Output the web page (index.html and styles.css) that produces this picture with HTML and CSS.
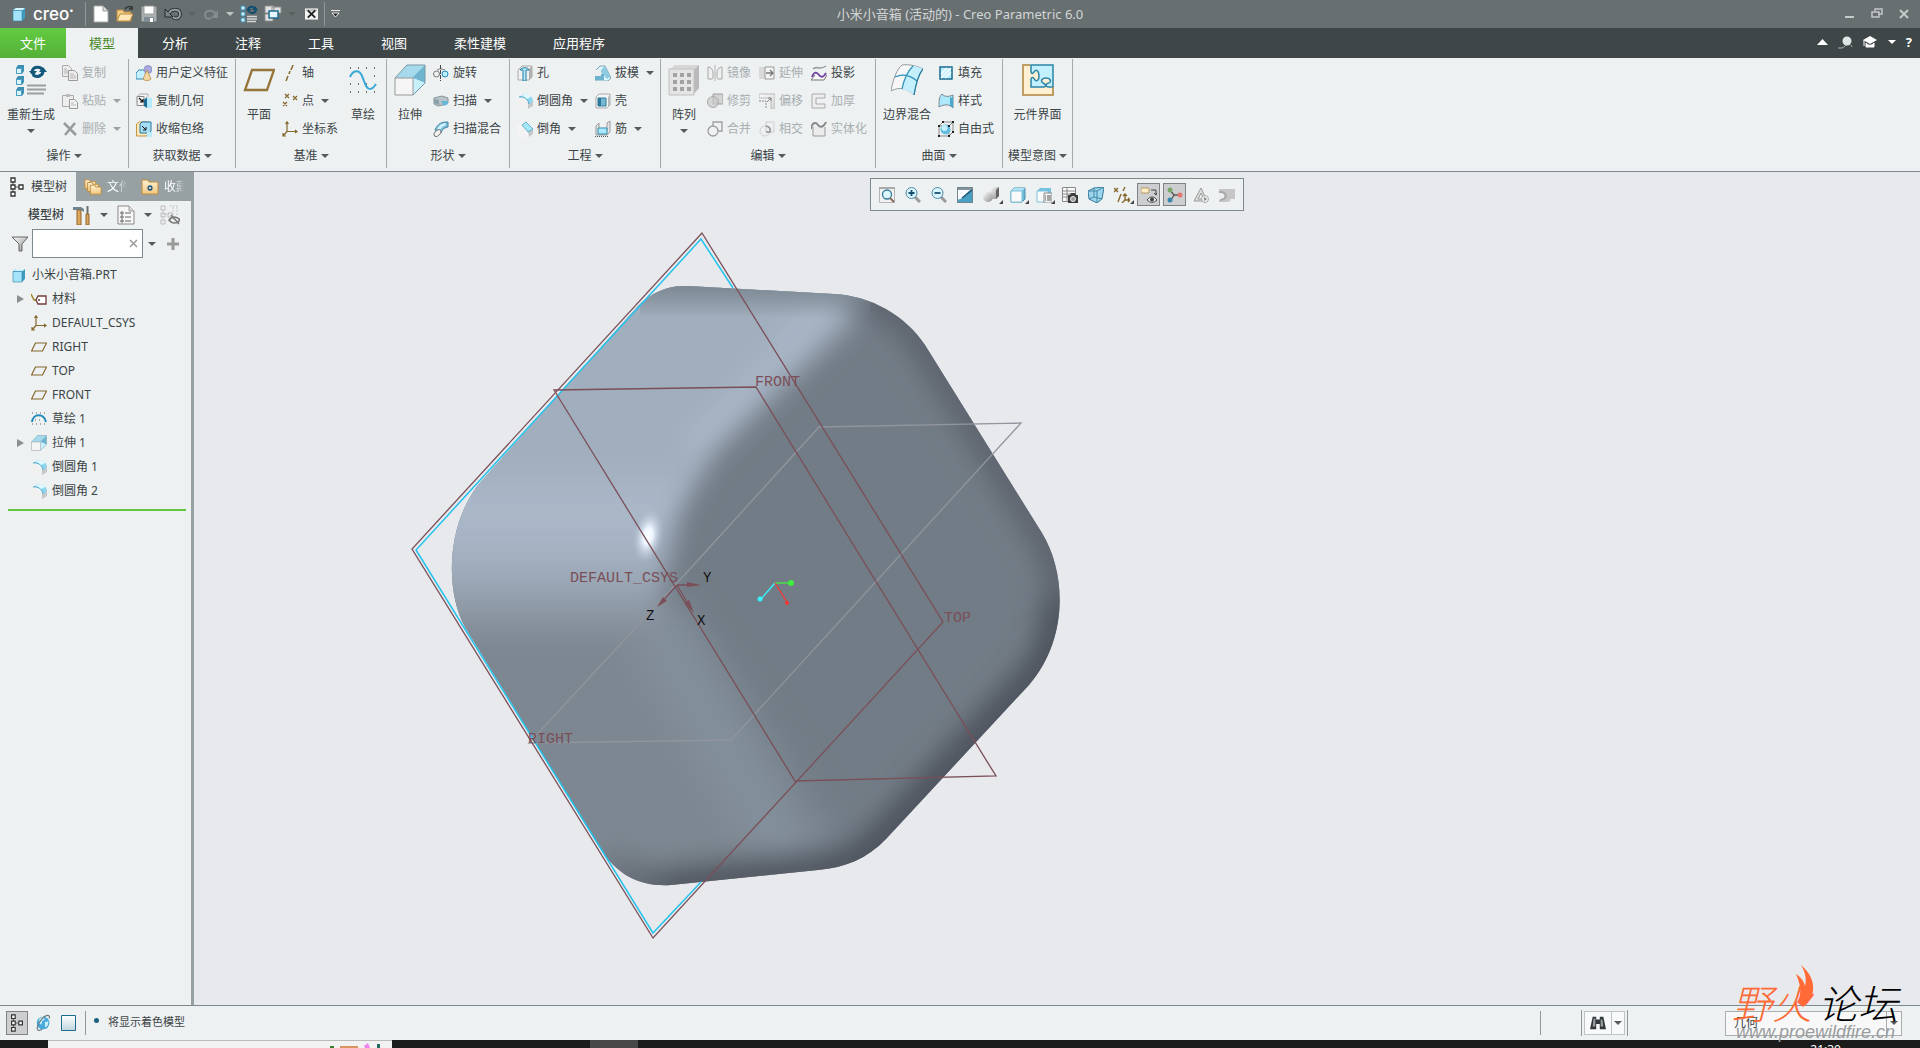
FILE: index.html
```html
<!DOCTYPE html>
<html lang="zh-CN">
<head>
  <meta charset="UTF-8">
  <meta name="viewport" content="width=device-width, initial-scale=1.0">
  <title>小米小音箱 (活动的) - Creo Parametric 6.0</title>
  <link rel="stylesheet" href="styles.css">
</head>
<body>
  <!-- Icon library -->
  <svg class="defs" width="0" height="0" aria-hidden="true">
    <defs>
      <linearGradient id="gGrey" x1="0" y1="0" x2="1" y2="1"><stop offset="0" stop-color="#fff"/><stop offset="1" stop-color="#8c8c8c"/></linearGradient>
      <linearGradient id="gGold" x1="0" y1="0" x2="0" y2="1"><stop offset="0" stop-color="#fff1d2"/><stop offset="1" stop-color="#f0c780"/></linearGradient>
      <linearGradient id="gPale" x1="0" y1="0" x2="1" y2="1"><stop offset="0" stop-color="#fafafa"/><stop offset="1" stop-color="#d4d4d4"/></linearGradient>
      <linearGradient id="gPage" x1="0" y1="0" x2="0" y2="1"><stop offset="0" stop-color="#fff"/><stop offset="1" stop-color="#bed5e0"/></linearGradient>
    </defs>
    <symbol id="cube" viewBox="0 0 16 16"><path d="M2 4l3-2h9v10l-3 3H2z" fill="#3f9cc0"/><path d="M2 4l3-2h9l-3 2.500z" fill="#d3f3ff"/><path d="M2 4.500h9V15H2z" fill="#a4e4fb" stroke="#2c7f9f" stroke-width=".6"/></symbol>
    <symbol id="new" viewBox="0 0 16 18"><path d="M1 1h9l5 5v11H1z" fill="#fff" stroke="#aaa"/><path d="M10 1v5h5" fill="#ddd" stroke="#999"/></symbol>
    <symbol id="open" viewBox="0 0 18 18"><path d="M1 5h6l1 2h7v9H1z" fill="#f4cd86" stroke="#b98a3c"/><path d="M4 9h13l-3 7H1z" fill="#ffe7b8" stroke="#b98a3c"/><path d="M9 4c2-3 5-3 7-1m0-2v3h-3" fill="none" stroke="#333" stroke-width="1.500"/></symbol>
    <symbol id="save" viewBox="0 0 18 18"><path d="M1 1h16v16H1z" fill="#aab0b2" stroke="#666"/><path d="M4 1h10v8H4z" fill="#fff" stroke="#999"/><path d="M4 12h10v5H4z" fill="#7f8c93"/><path d="M10 13h3v4h-3z" fill="#fff"/></symbol>
    <symbol id="undo" viewBox="0 0 18 16"><path d="M5 7c3-5 11-4 11 1 0 4-4 6-7 3" fill="none" stroke="#22282a" stroke-width="3.500"/><path d="M1 3v8h8z" fill="#7b8486" stroke="#22282a"/><path d="M5 7c3-5 11-4 11 1 0 4-4 6-7 3" fill="none" stroke="#9aa3a5" stroke-width="1.800"/></symbol>
    <symbol id="redo" viewBox="0 0 18 16"><path d="M14 8c-3-5-11-4-11 1 0 3 3 5 6 3" fill="none" stroke="#858c8e" stroke-width="2"/><path d="M16 4v8H9z" fill="#858c8e"/></symbol>
    <symbol id="regen" viewBox="0 0 32 32"><path d="M1 4l2-3h6v6l-2 3H1zM1 15l2-3h6v6l-2 3H1zM1 26l2-3h6v6l-2 3H1z" fill="#3c8fb2"/><path d="M1.500 4.500h5v5h-5zM1.500 15.500h5v5h-5zM1.500 26.500h5v5h-5z" fill="#d6f5ff" stroke="#4c9fc0"/><path d="M12 21.500h19M12 25.500h19M12 29.500h17" stroke="#9b9fa1" stroke-width="2"/><path d="M17 8c1-6 8-6 11-2M28 7c0 5-6 7-10 4" fill="none" stroke="#13577b" stroke-width="3"/><path d="M14 7h8l-4 5zM24 8h8l-4-5z" fill="#13577b"/></symbol>
    <symbol id="regenS" viewBox="0 0 18 18"><path d="M1 1h4v4H1zM1 7h4v4H1zM1 13h4v4H1z" fill="#c8f0ff" stroke="#3f8fb0"/><path d="M7 11.500h10M7 14h10M7 16.500h9" stroke="#d2d5d6" stroke-width="1.500"/><path d="M8 5c1-4 5-4 6-2M16 4c0 4-4 5-6 3" fill="none" stroke="#104f72" stroke-width="2"/><path d="M6 4h5L8.500 8zM12 5h6l-3-4z" fill="#104f72"/></symbol>
    <symbol id="windows" viewBox="0 0 18 18"><path d="M1 1h9v7H1zM8 2h9v6H8zM1 9h8v7H1z" fill="#e1e1e1" stroke="#8d8d8d"/><path d="M5 6h9v7H5z" fill="#e6f7ff" stroke="#1f6c91" stroke-width="1.500"/></symbol>
    <symbol id="closewin" viewBox="0 0 14 12"><path d="M0 0h14v12H0z" fill="#f4f4f4"/><path d="M1 1h12v2H1z" fill="#bbb"/><path d="M3 2l8 8M11 2l-8 8" stroke="#222" stroke-width="2"/></symbol>
    <symbol id="copy" viewBox="0 0 16 16"><path d="M.500.500h6l3 3v8h-9z" fill="#ececec" stroke="#aaa"/><path d="M6.500 5.500h6l3 3v7h-9z" fill="#eee" stroke="#999"/><path d="M8 9h4M8 11h6M8 13h6M2 4h3M2 6h4M2 8h4" stroke="#b5b5b5"/></symbol>
    <symbol id="paste" viewBox="0 0 16 16"><path d="M.500 2.500h11v11H.500z" fill="#eee" stroke="#aaa"/><path d="M4 1h4v3H4z" fill="#bbb"/><path d="M7.500 6.500h5l3 3v6h-8z" fill="#f2f2f2" stroke="#999"/><path d="M9 10h3M9 12h5" stroke="#bbb"/></symbol>
    <symbol id="del" viewBox="0 0 16 16"><path d="M2 2l12 12M13 2L3 14" stroke="#989c9e" stroke-width="2.600"/></symbol>
    <symbol id="udf" viewBox="0 0 16 16"><path d="M0 8l3-3h7v7l-2 2H0z" fill="#c3efff" stroke="#3589ae"/><circle cx="12" cy="4.500" r="4" fill="#aaa8e0" stroke="#7879b6" stroke-width=".6"/><path d="M11 5l4 9c-2 2-6 2-8 0z" fill="#f5d9a3" stroke="#ad8137" stroke-width=".7"/></symbol>
    <symbol id="copygeo" viewBox="0 0 16 16"><path d="M1 4l3-3h8v3" fill="#f3f3f3" stroke="#aaa"/><path d="M1 3.500h7v9H1z" fill="#f4f4f4" stroke="#888"/><path d="M3 5l4 4m0-3v3H4" stroke="#111" fill="none" stroke-width="1.200"/><path d="M8 7l3-3v11l-3-2z" fill="#1a6b91"/><path d="M11 5h5v10h-5z" fill="#b5e9fc"/></symbol>
    <symbol id="shrink" viewBox="0 0 16 16"><path d="M.500 3l3-2h9v11l-2 3H.500z" fill="#ffe8b9" stroke="#c19545"/><path d="M4 3l2-2h9v9l-2 2H4z" fill="#a6dff5" stroke="#28769b"/><path d="M6 5l4 4m0-3v3H7" stroke="#111" fill="none"/><path d="M11 11h5v5h-5z" fill="#b9ecff"/></symbol>
    <symbol id="plane" viewBox="0 0 32 32"><path d="M9 6h22l-7 20H2z" fill="none" stroke="#957539" stroke-width="2.300"/></symbol>
    <symbol id="planeS" viewBox="0 0 16 16"><path d="M4.500 4h11l-4 8H.500z" fill="none" stroke="#86682d" stroke-width="1.200"/></symbol>
    <symbol id="axis" viewBox="0 0 16 16"><path d="M11 0L9 5M8 6L7 9M6 11l-2 5" stroke="#86682d" stroke-width="1.500"/></symbol>
    <symbol id="points" viewBox="0 0 16 16"><path d="M3 1l4 4m0-4L3 5M11 3l4 4m0-4l-4 4M1 9l4 4m0-4l-4 4" stroke="#86682d" stroke-width="1.300"/></symbol>
    <symbol id="csys" viewBox="0 0 16 16"><path d="M5 1v9.500h10M5 10.500L1 15M3.500 3L5 .800 6.500 3M13 9l2 1.500L13 12M1 12v3h3" fill="none" stroke="#86682d" stroke-width="1.200"/></symbol>
    <symbol id="sketch" viewBox="0 0 32 32"><path d="M3 4h1m7 0h1m7 0h1m7 0h1M3 12h1m23 0h1M3 20h1m7 0h1m7 0h1M3 28h1m7 0h1m7 0h1m7 0h1" stroke="#444" stroke-width="1.300"/><path d="M3 13c3-7 9-8 12-1s4 13 8 13c3 0 4-2 6-5" fill="none" stroke="#38a9d7" stroke-width="2"/></symbol>
    <symbol id="sketchS" viewBox="0 0 16 16"><path d="M1 2h1m3 0h1m3 0h1m3 0h1M1 13h1m3 0h1m3 0h1m3 0h1M4 9h1m3 0h1" stroke="#666"/><path d="M1 11C2 2 13 2 15 11" fill="none" stroke="#2389b9" stroke-width="2"/></symbol>
    <symbol id="extrude" viewBox="0 0 32 32"><path d="M1 14L13 1h18v18L19 32z" fill="#dcf7ff"/><path d="M13 1h18L19 14H1z" fill="#a5d9ec"/><path d="M31 1v18L19 14V13z" fill="#70b5cf"/><path d="M31 19L19 32V14z" fill="#c8f0fc"/><path d="M1 14L13 1h18v18L19 31" fill="none" stroke="#7998a5"/><path d="M1 14h18v17H1z" fill="#f5f5f5" stroke="#999"/></symbol>
    <symbol id="revolve" viewBox="0 0 16 16"><path d="M4 5c3-2 5-1 8 0" fill="none" stroke="#777"/><circle cx="3.500" cy="9" r="3" fill="#eee" stroke="#777"/><circle cx="12" cy="9" r="3" fill="#baf0ff" stroke="#2488b0"/><path d="M7.500 0v16" stroke="#444" stroke-dasharray="4 1"/></symbol>
    <symbol id="sweep" viewBox="0 0 16 16"><path d="M1 5l8-2 6 2v5l-5-1v3l-5 1-4-2z" fill="#b9c4c9" stroke="#8a969b"/><path d="M8 8h7v3l-4 2z" fill="#68b8d7"/><path d="M1 6l5 1v5l-5-2z" fill="#8ba1a9"/></symbol>
    <symbol id="blend" viewBox="0 0 16 16"><path d="M2 9C5 2 9 1 15 1v5C10 7 9 9 8 12z" fill="#78bfdc" stroke="#4382a0"/><path d="M4 8C6 4 9 2 13 2l-1 3C9 5 8 7 7 10z" fill="#cef3ff"/><ellipse cx="4.500" cy="12" rx="4" ry="2.500" fill="#f4f4f4" stroke="#777" transform="rotate(-45 4.500 12)"/></symbol>
    <symbol id="hole" viewBox="0 0 16 16"><path d="M1 5l4-4h10v11l-3 3H1z" fill="#f1f1f1" stroke="#aaa"/><path d="M12 4l3-3v11l-3 3z" fill="#b0b0b0"/><path d="M3 5c1-3 9-3 9 0H9v11H6V5z" fill="#b9e8f8" stroke="#217fa5"/></symbol>
    <symbol id="round" viewBox="0 0 16 16"><path d="M0 5l4-4h8l4 5v7l-4 3H0z" fill="#f1f1f1"/><path d="M11 10l5-3v6l-5 3z" fill="#c4c8ca"/><path d="M2 4l5-3c5 0 9 3 9 7l-4 3C12 7 8 4 2 4z" fill="#8ed5ee"/><path d="M2 4c5-1 9 2 10 7" fill="none" stroke="#4ba7c8"/><path d="M4 3l4-2c3 0 5 1 6 3l-4 2C8 4 6 3 4 3z" fill="#e0f8ff"/></symbol>
    <symbol id="chamfer" viewBox="0 0 16 16"><path d="M0 5l4-4h7l5 6v6l-4 3H0z" fill="#f3f3f3"/><path d="M11 11l5-4v6l-4 3z" fill="#c4c8ca"/><path d="M5 4l4-3 7 7-5 3z" fill="#a5e6f8" stroke="#3d9aba" stroke-width=".7"/></symbol>
    <symbol id="draft" viewBox="0 0 16 16"><path d="M1 5l4-4h5l6 12-3 3H1z" fill="#def7ff" stroke="#78a3b3"/><path d="M5 6l5-5 5 11-3 2z" fill="#8ccbe2"/><path d="M0 9h9v6H0z" fill="#6cb4cd"/><path d="M0 5h6v6H0z" fill="#eee"/></symbol>
    <symbol id="shell" viewBox="0 0 16 16"><path d="M1 4l3-3h11v11l-3 3H1z" fill="#f4f4f4" stroke="#aaa"/><path d="M3 5h8v8H3z" fill="#78b8d1" stroke="#317f9e"/><path d="M3 5h3v8H3z" fill="#2c789b"/><path d="M13 4l2-2v10l-2 2z" fill="#bbb"/></symbol>
    <symbol id="rib" viewBox="0 0 16 16"><path d="M1 5l3-3v8h8V2l3-2v11l-3 3H1z" fill="#e6e6e6" stroke="#999"/><path d="M3 7h9v6H3z" fill="#a9eaff" stroke="#3689aa"/><path d="M0 15.500h14" stroke="#555" stroke-dasharray="1 1"/></symbol>
    <symbol id="pattern" viewBox="0 0 32 32"><path d="M1 7l6-6h24v23l-6 7H1z" fill="#b9b9b9"/><path d="M1 7l6-6h24l-6 6z" fill="#d7d7d7"/><path d="M1 5h25v26H1z" fill="#e4e4e4" stroke="#c0c0c0"/><path d="M5 9h4v4H5zM12 9h4v4h-4zM19 9h4v4h-4zM5 16h4v4H5zM12 16h4v4h-4zM19 16h4v4h-4zM5 23h4v4H5zM12 23h4v4h-4zM19 23h4v4h-4z" fill="#a2a2a2"/></symbol>
    <symbol id="mirror" viewBox="0 0 16 16"><path d="M1 2c3 0 5 3 5 6s0 6-1 6H1zM15 2c-3 0-5 3-5 6s0 6 1 6h4z" fill="#f0f0f0" stroke="#a6a6a6"/><path d="M8 0v16" stroke="#b3b3b3"/></symbol>
    <symbol id="trim" viewBox="0 0 16 16"><path d="M6 1h10v10H6z" fill="#d4d4d4" stroke="#9e9e9e"/><circle cx="6" cy="9" r="5.500" fill="#c9c9c9" fill-opacity=".7" stroke="#aaa"/></symbol>
    <symbol id="merge" viewBox="0 0 16 16"><path d="M6 1h9v9H6z" fill="none" stroke="#9e9e9e" stroke-width="1.300"/><circle cx="6" cy="10" r="5" fill="#edf1f2" stroke="#9e9e9e" stroke-width="1.300"/></symbol>
    <symbol id="intersect" viewBox="0 0 16 16"><path d="M7 1h8v10H7z" fill="none" stroke="#cfcfcf"/><circle cx="6" cy="10" r="5" fill="none" stroke="#cfcfcf"/><path d="M7 5c4 1 5 3 4 6H7" fill="none" stroke="#929292" stroke-width="1.500"/></symbol>
    <symbol id="extend" viewBox="0 0 16 16"><path d="M0 2h7v12H0z" fill="#d9d9d9"/><path d="M6 2h9v12H6z" fill="#f4f4f4" stroke="#999"/><path d="M7 8h6m-2-3l3 3-3 3" stroke="#777" fill="none" stroke-width="1.300"/></symbol>
    <symbol id="offset" viewBox="0 0 16 16"><path d="M0 1h16v15h-4V5H0z" fill="url(#gPale)" stroke="#bbb"/><path d="M0 8h7v8" fill="none" stroke="#888" stroke-dasharray="2 1"/><path d="M8 9l4-4m-3 0h3v3" fill="none" stroke="#888"/></symbol>
    <symbol id="project" viewBox="0 0 16 16"><path d="M2 4c4-4 6 2 13-3" fill="none" stroke="#929b9e" stroke-width="1.500"/><path d="M4 10L0 15h13l3-5" fill="#f8f8f8" stroke="#777"/><path d="M1 12c2-6 5-5 7-2s5 2 7-2" fill="none" stroke="#7241a0" stroke-width="1.800"/></symbol>
    <symbol id="thicken" viewBox="0 0 16 16"><path d="M1 1h13v4H5v6h9v4H1z" fill="#eee" stroke="#aaa"/></symbol>
    <symbol id="solidify" viewBox="0 0 16 16"><path d="M2 6v9h12V6" fill="#ececec" stroke="#999"/><path d="M0 8c1-7 5-7 7-4s6 2 8-3" fill="none" stroke="#888" stroke-width="2"/></symbol>
    <symbol id="boundary" viewBox="0 0 32 32"><path d="M0 27C2 15 6 5 11 1c8-1 15 1 21 4-5 6-7 14-9 26C17 25 9 22 0 27z" fill="#f7f7f7" stroke="#929b9e"/><path d="M22 2c4 0 7 2 10 3-5 6-7 14-9 26-3-3-7-5-12-6 1-9 4-17 11-23z" fill="#c4effd"/><path d="M22 2C16 8 13 15 11 25M4 13c9-4 16-1 22 4" fill="none" stroke="#2d91b8" stroke-width="1.200"/><path d="M23 31c2-12 4-20 9-26" stroke="#247ca0" fill="none" stroke-width="1.300"/></symbol>
    <symbol id="fill" viewBox="0 0 16 16"><path d="M2 2h12v12H2z" fill="#bfefff" stroke="#186b90" stroke-width="1.500"/><path d="M3 9l6-6M3 13L13 3M7 13l6-6" stroke="#fff" stroke-width="1.200"/></symbol>
    <symbol id="style" viewBox="0 0 16 16"><path d="M1 14C1 7 1 4 4 1c3 3 6 3 11 1v13c-3-4-9-4-14-1z" fill="#aee8fb" stroke="#78888e"/><path d="M12 4c2 1 2 1 3-1v12l-3-2z" fill="#4ba9cf"/></symbol>
    <symbol id="freestyle" viewBox="0 0 16 16"><path d="M1 5h10v10H1zM1 5l4-4h10v10l-4 4M11 5l4-4" fill="none" stroke="#8b8b8b"/><circle cx="7.500" cy="8.500" r="5" fill="#64bce0"/><circle cx="6.500" cy="7" r="3" fill="#c4f2ff"/><path d="M0 4h2v2H0zM10 4h2v2h-2zM0 14h2v2H0zM10 14h2v2h-2zM4 0h2v2H4zM14 0h2v2h-2zM14 10h2v2h-2z" fill="#222"/></symbol>
    <symbol id="component" viewBox="0 0 32 32"><path d="M1 1h30v30H1z" fill="#fff0d4"/><path d="M9 1h22v22h-5c-4-1-1-4 1-4 3-2 1-5-3-5s-6 3-3 5c2 1 4 3 1 4H9v-8c1-3 3-1 4 1 2 2 4 0 4-4s-2-7-4-5-3 4-4 1z" fill="#c3f0ff" stroke="#2d84a6" stroke-width="1.500"/><path d="M8 1H1v30h30v-8" fill="none" stroke="#af8239" stroke-width="1.500"/></symbol>
    <symbol id="tree" viewBox="0 0 16 20"><path d="M4 5v10M6 10h5" stroke="#555"/><path d="M2 1h4v4H2zM2 8h4v4H2zM2 15h4v4H2zM10 8h4v4h-4z" fill="#fff" stroke="#333" stroke-width="1.300"/></symbol>
    <symbol id="folders" viewBox="0 0 20 20"><g fill="url(#gGold)" stroke="#bd8c3e"><path d="M1 2h5l1 2h6v8H1z"/><path d="M4 5h5l1 2h6v8H4z"/><path d="M7 8h5l1 2h6v8H7z"/></g></symbol>
    <symbol id="fav" viewBox="0 0 18 16"><path d="M1 1h6l1 2h9v12H1z" fill="url(#gGold)" stroke="#bd8c3e"/><path d="M9 6v6M6 9h6M7 7l4 4M11 7l-4 4" stroke="#174c75" stroke-width="1.200"/><circle cx="9" cy="9" r="1" fill="#fff"/></symbol>
    <symbol id="tools" viewBox="0 0 18 20"><path d="M0 2h8l3 2v3L8 5H0z" fill="#6f8490"/><path d="M4 5h4v15H4z" fill="#dca65b" stroke="#8f662e"/><path d="M14.500 1v9" stroke="#6e6e6e" stroke-width="2"/><path d="M13 9h3v11h-3z" fill="#dba25a" stroke="#8f662e"/></symbol>
    <symbol id="list" viewBox="0 0 18 20"><path d="M1 1h11l5 5v13H1z" fill="#f7f7f7" stroke="#888"/><path d="M12 1v5h5" fill="#ddd" stroke="#999"/><path d="M8 8h6M8 12h6M8 16h6" stroke="#666"/><g fill="#fff" stroke="#555"><circle cx="5" cy="8" r="1.200"/><circle cx="5" cy="12" r="1.200"/><circle cx="5" cy="16" r="1.200"/></g></symbol>
    <symbol id="hidden" viewBox="0 0 20 20"><path d="M3 5v10M5 9h4M10 1h9M13 2v8M17 2v8" stroke="#c1c5c7" stroke-dasharray="2 1"/><path d="M1 1h4v4H1zM1 8h4v4H1zM1 15h4v4H1zM8 8h4v4H8z" fill="none" stroke="#bbb"/><path d="M9 15c3-4 8-4 11 0-3 4-8 4-11 0zM11 10l8 9" fill="none" stroke="#777" stroke-width="1.500"/></symbol>
    <symbol id="funnel" viewBox="0 0 16 16"><path d="M0 1h16l-6 7v7H7V8z" fill="url(#gGrey)" stroke="#666"/></symbol>
    <symbol id="plus" viewBox="0 0 12 12"><path d="M6 0v12M0 6h12" stroke="#999" stroke-width="3"/></symbol>
    <symbol id="material" viewBox="0 0 16 16"><path d="M0 3l3 6h4" fill="none" stroke="#a08124" stroke-width="1.500"/><path d="M5 9l2-4h8v8H7z" fill="#fff" stroke="#713b39" stroke-width="1.300"/><circle cx="8" cy="9" r="1" fill="#713b39"/></symbol>
    <symbol id="zoomfit" viewBox="0 0 16 16"><path d="M.500.500h15v15H.500z" fill="#f2f2f2" stroke="#b5b5b5"/><path d="M0 1h16" stroke="#aaa" stroke-width="2"/><circle cx="8" cy="7.500" r="4.500" fill="#ddf8ff" stroke="#347b98" stroke-width="1.300"/><path d="M11 11l4 4" stroke="#8a7062" stroke-width="2"/></symbol>
    <symbol id="zoomin" viewBox="0 0 16 16"><path d="M10 10l5 5" stroke="#999" stroke-width="3"/><circle cx="6.500" cy="6" r="5.500" fill="#d9f5ff" stroke="#4f8ba4"/><path d="M6.500 3v6M3.500 6h6" stroke="#15506f" stroke-width="1.800"/></symbol>
    <symbol id="zoomout" viewBox="0 0 16 16"><path d="M10 10l5 5" stroke="#999" stroke-width="3"/><circle cx="6.500" cy="6" r="5.500" fill="#d9f5ff" stroke="#4f8ba4"/><path d="M3.500 6h6" stroke="#15506f" stroke-width="1.800"/></symbol>
    <symbol id="repaint" viewBox="0 0 16 16"><path d="M0 0h16v16H0z" fill="#4aa0c2"/><path d="M0 3h14C8 5 10 11 0 13z" fill="#f8fcff"/><path d="M0 1.500h16" stroke="#85949a" stroke-width="3"/><path d="M5 11l10-8" stroke="#174f6b" stroke-width="1.500"/><path d="M.500.500h15v15H.500z" fill="none" stroke="#73858c"/></symbol>
    <symbol id="shade" viewBox="0 0 16 16"><path d="M7 3l3-3h6v9l-3 3H7z" fill="url(#gGrey)"/><path d="M13 3l3-3v9l-3 3z" fill="#666"/><circle cx="5" cy="10" r="5" fill="url(#gGrey)"/></symbol>
    <symbol id="view" viewBox="0 0 16 16"><path d="M1 4l3-3h11v11l-3 3H1z" fill="#6cbcda" stroke="#4c8dab"/><path d="M1 4l3-3h11l-3 3z" fill="#aee3f5"/><path d="M1 4h11v11H1z" fill="#fafafa" stroke="#7fc1da"/></symbol>
    <symbol id="viewlist" viewBox="0 0 16 16"><path d="M1 4l3-3h11v11l-3 3H1z" fill="#77c3df"/><path d="M1 4h11v11H1z" fill="#fafafa" stroke="#7fc1da"/><path d="M8 6h8v10H8z" fill="#f5f5f5" stroke="#888"/><path d="M9 9h1m1 0h4M9 11h1m1 0h4M9 13h1m1 0h4" stroke="#555"/></symbol>
    <symbol id="viewmgr" viewBox="0 0 16 16"><path d="M.500.500h13v14H.500zM0 4h14M0 7h14M0 10h14M5 0v15" fill="#fafafa" stroke="#888"/><path d="M6 8h2l1-2h4l1 2h2v8H6z" fill="#3e3e3e"/><circle cx="11" cy="12" r="2.500" fill="#9a9a9a" stroke="#eee"/></symbol>
    <symbol id="perspective" viewBox="0 0 16 16"><path d="M0 4l6-3 10-1-2 12-5 4-8-4z" fill="#9bd6ec" stroke="#34799a"/><path d="M0 4h9l7-4M9 4v12M6 1v9l8 2M1 12l5-2" fill="none" stroke="#4587a5"/></symbol>
    <symbol id="datumdisp" viewBox="0 0 16 16"><path d="M0 1l4 4m0-4L0 5M11 0L9 4M7 7l-3 8M11 7v6h5M11 13l-3 3M9 9l2-2 2 2M14 11l2 2-2 2" fill="none" stroke="#86682d" stroke-width="1.400"/></symbol>
    <symbol id="annot" viewBox="0 0 16 16"><path d="M0 1h8v5H0z" fill="#ffedc6" stroke="#b39a66"/><path d="M10 3h5v5m-2-2l2 2 1-2" fill="none" stroke="#444"/><path d="M6 13c3-4 7-4 10 0-3 3-7 3-10 0z" fill="#eee" stroke="#444"/><circle cx="11" cy="12.500" r="2" fill="#444"/></symbol>
    <symbol id="spin" viewBox="0 0 16 16"><path d="M3 3l4 5-3 5M7 8h6" fill="none" stroke="#555" stroke-width="1.300"/><circle cx="3" cy="3" r="2.500" fill="#75a967"/><circle cx="3" cy="13" r="2.500" fill="#3986ae"/><circle cx="13" cy="8" r="2.500" fill="#df7770"/></symbol>
    <symbol id="warn" viewBox="0 0 16 16"><path d="M8 1l6 13H1zM8 6l-3 6h6z" fill="#ddd" stroke="#999"/><circle cx="12" cy="12" r="3.500" fill="#eee" stroke="#aaa"/><path d="M11 10v4l3-2z" fill="#888"/></symbol>
    <symbol id="fringe" viewBox="0 0 16 16"><path d="M0 2h16v10h-5c1 0 1 3-3 3H0v-2c7 0 7-8 0-8z" fill="#c6c6c6"/><path d="M0 5c9-1 9 8 1 8" fill="none" stroke="#aaa" stroke-width="2"/></symbol>
    <symbol id="globe" viewBox="0 0 18 20"><circle cx="8" cy="10" r="7" fill="#44a9dc"/><path d="M4 5l4-2 2 3-3 2-1 4-3-2zM10 9l4-1-1 5-3 2z" fill="#c9ecfa"/><path d="M7 17C2 20-1 17 4 9S16-1 15 5" fill="none" stroke="#687a82" stroke-width="1.300"/></symbol>
    <symbol id="page" viewBox="0 0 18 18"><path d="M1.500 1.500h14v15h-14z" fill="url(#gPage)" stroke="#1d6a8d"/></symbol>
    <symbol id="binoc" viewBox="0 0 18 16"><path d="M3 1h4v3h4V1h4l3 14h-7V9H7v6H0z" fill="#313739"/><path d="M4 3h2v9H3zM12 4h2l1 8h-3z" fill="#969da0"/></symbol>
  </svg>

  <!-- Title bar -->
  <header class="titlebar">
    <div class="quick">
      <svg class="ic16"><use href="#cube"/></svg>
      <span class="brand">creo<sup>•</sup></span>
      <span class="vline"></span>
      <button aria-label="新建"><svg class="ic18"><use href="#new"/></svg></button>
      <button aria-label="打开"><svg class="ic18"><use href="#open"/></svg></button>
      <button aria-label="保存"><svg class="ic18"><use href="#save"/></svg></button>
      <button aria-label="撤消"><svg class="ic18"><use href="#undo"/></svg></button>
      <i class="arrow faint"></i>
      <button aria-label="重做"><svg class="ic18"><use href="#redo"/></svg></button>
      <i class="arrow pale"></i>
      <button aria-label="重新生成"><svg class="ic18"><use href="#regenS"/></svg></button>
      <button aria-label="窗口"><svg class="ic18"><use href="#windows"/></svg></button>
      <i class="arrow faint"></i>
      <button aria-label="关闭"><svg class="closeicon"><use href="#closewin"/></svg></button>
      <span class="vline"></span>
      <button aria-label="自定义快速访问工具栏"><svg width="9" height="8" viewBox="0 0 9 8"><path d="M0 .500h9M1 3h7L4.500 7z" fill="#222" stroke="#eee"/></svg></button>
    </div>
    <div class="title">小米小音箱 (活动的) - Creo Parametric 6.0</div>
    <div class="winctl">
      <button aria-label="最小化"><svg width="12" height="12"><path d="M1 9h9" stroke="#c4c8c9" stroke-width="2"/></svg></button>
      <button aria-label="还原"><svg width="12" height="12"><path d="M4 3V1h7v5H8M1 4h7v5H1z" fill="none" stroke="#c4c8c9" stroke-width="1.500"/></svg></button>
      <button aria-label="关闭"><svg width="12" height="12"><path d="M2 2l8 8M10 2l-8 8" stroke="#c4c8c9" stroke-width="2"/></svg></button>
    </div>
  </header>

  <!-- Ribbon tabs -->
  <nav class="tabs">
    <button class="file">文件</button>
    <button class="active">模型</button>
    <button>分析</button>
    <button>注释</button>
    <button>工具</button>
    <button>视图</button>
    <button>柔性建模</button>
    <button>应用程序</button>
    <div class="tabtools">
      <button aria-label="最小化功能区"><svg width="11" height="6"><path d="M0 6l5.500-6L11 6z" fill="#fff"/></svg></button>
      <button aria-label="搜索"><svg width="15" height="15"><circle cx="9" cy="6" r="4.500" fill="#dfe4e5"/><path d="M13 10l1 2M0 13h4c3-1 3-3 5-3" fill="none" stroke="#aab0b2"/></svg></button>
      <button aria-label="学习"><svg width="15" height="14"><path d="M7 1l7 4-7 4-7-4z" fill="#fff"/><path d="M3 8c2 3 6 3 8 0v4H3zM1 5v6" fill="#fff" stroke="#fff"/></svg></button>
      <i class="arrow white"></i>
      <button class="help" aria-label="帮助">?</button>
    </div>
  </nav>

  <!-- Ribbon -->
  <div class="ribbon">
    <section class="group g1">
      <div class="cmds">
        <button class="big"><svg><use href="#regen"/></svg>重新生成<i class="arrow"></i></button>
        <div class="col">
          <button class="cmd" disabled><svg><use href="#copy"/></svg>复制</button>
          <button class="cmd" disabled><svg><use href="#paste"/></svg>粘贴<i class="arrow"></i></button>
          <button class="cmd" disabled><svg><use href="#del"/></svg>删除<i class="arrow"></i></button>
        </div>
      </div>
      <button class="caption">操作<i class="arrow"></i></button>
    </section>
    <section class="group g2">
      <div class="cmds">
        <div class="col">
          <button class="cmd"><svg><use href="#udf"/></svg>用户定义特征</button>
          <button class="cmd"><svg><use href="#copygeo"/></svg>复制几何</button>
          <button class="cmd"><svg><use href="#shrink"/></svg>收缩包络</button>
        </div>
      </div>
      <button class="caption">获取数据<i class="arrow"></i></button>
    </section>
    <section class="group g3">
      <div class="cmds">
        <button class="big"><svg><use href="#plane"/></svg>平面</button>
        <div class="col">
          <button class="cmd"><svg><use href="#axis"/></svg>轴</button>
          <button class="cmd"><svg><use href="#points"/></svg>点<i class="arrow"></i></button>
          <button class="cmd"><svg><use href="#csys"/></svg>坐标系</button>
        </div>
        <button class="big"><svg><use href="#sketch"/></svg>草绘</button>
      </div>
      <button class="caption">基准<i class="arrow"></i></button>
    </section>
    <section class="group g4">
      <div class="cmds">
        <button class="big"><svg><use href="#extrude"/></svg>拉伸</button>
        <div class="col">
          <button class="cmd"><svg><use href="#revolve"/></svg>旋转</button>
          <button class="cmd"><svg><use href="#sweep"/></svg>扫描<i class="arrow"></i></button>
          <button class="cmd"><svg><use href="#blend"/></svg>扫描混合</button>
        </div>
      </div>
      <button class="caption">形状<i class="arrow"></i></button>
    </section>
    <section class="group g5">
      <div class="cmds">
        <div class="col">
          <button class="cmd"><svg><use href="#hole"/></svg>孔</button>
          <button class="cmd"><svg><use href="#round"/></svg>倒圆角<i class="arrow"></i></button>
          <button class="cmd"><svg><use href="#chamfer"/></svg>倒角<i class="arrow"></i></button>
        </div>
        <div class="col">
          <button class="cmd"><svg><use href="#draft"/></svg>拔模<i class="arrow"></i></button>
          <button class="cmd"><svg><use href="#shell"/></svg>壳</button>
          <button class="cmd"><svg><use href="#rib"/></svg>筋<i class="arrow"></i></button>
        </div>
      </div>
      <button class="caption">工程<i class="arrow"></i></button>
    </section>
    <section class="group g6">
      <div class="cmds">
        <button class="big"><svg><use href="#pattern"/></svg>阵列<i class="arrow"></i></button>
        <div class="col">
          <button class="cmd" disabled><svg><use href="#mirror"/></svg>镜像</button>
          <button class="cmd" disabled><svg><use href="#trim"/></svg>修剪</button>
          <button class="cmd" disabled><svg><use href="#merge"/></svg>合并</button>
        </div>
        <div class="col">
          <button class="cmd" disabled><svg><use href="#extend"/></svg>延伸</button>
          <button class="cmd" disabled><svg><use href="#offset"/></svg>偏移</button>
          <button class="cmd" disabled><svg><use href="#intersect"/></svg>相交</button>
        </div>
        <div class="col">
          <button class="cmd"><svg><use href="#project"/></svg>投影</button>
          <button class="cmd" disabled><svg><use href="#thicken"/></svg>加厚</button>
          <button class="cmd" disabled><svg><use href="#solidify"/></svg>实体化</button>
        </div>
      </div>
      <button class="caption">编辑<i class="arrow"></i></button>
    </section>
    <section class="group g7">
      <div class="cmds">
        <button class="big"><svg><use href="#boundary"/></svg>边界混合</button>
        <div class="col">
          <button class="cmd"><svg><use href="#fill"/></svg>填充</button>
          <button class="cmd"><svg><use href="#style"/></svg>样式</button>
          <button class="cmd"><svg><use href="#freestyle"/></svg>自由式</button>
        </div>
      </div>
      <button class="caption">曲面<i class="arrow"></i></button>
    </section>
    <section class="group g8">
      <div class="cmds">
        <button class="big"><svg><use href="#component"/></svg>元件界面</button>
      </div>
      <button class="caption">模型意图<i class="arrow"></i></button>
    </section>
  </div>

  <main>
    <!-- Model tree -->
    <aside class="side">
      <div class="sidetabs">
        <button class="active"><svg><use href="#tree"/></svg>模型树</button>
        <button><svg><use href="#folders"/></svg><span class="cut">文件</span></button>
        <button><svg><use href="#fav"/></svg><span class="cut">收藏</span></button>
      </div>
      <div class="treebar">
        <b>模型树</b>
        <button aria-label="设置"><svg class="ic20"><use href="#tools"/></svg></button><i class="arrow"></i>
        <button aria-label="显示"><svg class="ic20"><use href="#list"/></svg></button><i class="arrow"></i>
        <button aria-label="隐藏"><svg class="ic20"><use href="#hidden"/></svg></button>
      </div>
      <div class="filter">
        <svg class="ic16"><use href="#funnel"/></svg>
        <label class="search"><input type="text" aria-label="过滤模型树"><span class="clear"><svg width="9" height="9"><path d="M1 1l7 7M8 1L1 8" stroke="#999" stroke-width="1.500"/></svg></span></label>
        <i class="arrow"></i>
        <button aria-label="添加"><svg width="12" height="12"><use href="#plus"/></svg></button>
      </div>
      <ul class="tree">
        <li class="root"><svg><use href="#cube"/></svg>小米小音箱.PRT</li>
        <li class="fold"><svg><use href="#material"/></svg>材料</li>
        <li><svg><use href="#csys"/></svg>DEFAULT_CSYS</li>
        <li><svg><use href="#planeS"/></svg>RIGHT</li>
        <li><svg><use href="#planeS"/></svg>TOP</li>
        <li><svg><use href="#planeS"/></svg>FRONT</li>
        <li><svg><use href="#sketchS"/></svg>草绘 1</li>
        <li class="fold"><svg><use href="#extrude"/></svg>拉伸 1</li>
        <li><svg><use href="#round"/></svg>倒圆角 1</li>
        <li><svg><use href="#round"/></svg>倒圆角 2</li>
      </ul>
    </aside>

    <!-- Graphics area -->
    <div class="canvas">
      <svg class="model" width="906" height="833" viewBox="194 172 906 833">
        <defs>
          <clipPath id="bodyClip"><path d="M688 286L834 294C871 296 905 315 925 345L1042 533C1067 574 1068 640 1029 685L886 839C868 858 845 868 818 870L671 885C640 887 618 875 602 851L465 627C447 595 444 530 478 485L638 306C652 292 668 285 688 286Z"/></clipPath>
          <linearGradient id="leftFace" gradientUnits="userSpaceOnUse" x1="0" y1="280" x2="0" y2="645">
            <stop offset="0" stop-color="#9dabb9"/><stop offset=".08" stop-color="#a1aebd"/><stop offset=".5" stop-color="#a1aebd"/>
            <stop offset=".62" stop-color="#aab8c9"/><stop offset=".72" stop-color="#a7b4c5"/><stop offset=".82" stop-color="#9ba8b6"/><stop offset="1" stop-color="#7d8791"/>
          </linearGradient>
          <linearGradient id="topEdge" gradientUnits="userSpaceOnUse" x1="0" y1="286" x2="0" y2="318"><stop offset="0" stop-color="#7c8892"/><stop offset="1" stop-color="#7c8892" stop-opacity="0"/></linearGradient>
          <linearGradient id="lowerRidge" gradientUnits="userSpaceOnUse" x1="655" y1="730" x2="755" y2="672">
            <stop offset="0" stop-color="#7d8791"/><stop offset=".5" stop-color="#84919d"/><stop offset="1" stop-color="#727c86"/>
          </linearGradient>
          <linearGradient id="bottomEdge" gradientUnits="userSpaceOnUse" x1="595" y1="0" x2="680" y2="0"><stop offset="0" stop-color="#656c77" stop-opacity=".4"/><stop offset="1" stop-color="#525862"/></linearGradient>
          <radialGradient id="shine"><stop offset="0" stop-color="#fff"/><stop offset=".3" stop-color="#edf5ff"/><stop offset="1" stop-color="#b0bfd1" stop-opacity="0"/></radialGradient>
          <filter id="soft" filterUnits="userSpaceOnUse" x="380" y="180" width="780" height="800"><feGaussianBlur stdDeviation="12"/></filter>
        </defs>
        <g clip-path="url(#bodyClip)">
          <path d="M440 270h640v630H440z" fill="#727c86"/>
          <g filter="url(#soft)">
            <path d="M360 620H640L690 600L860 850L800 960H360z" fill="url(#lowerRidge)"/>
            <path d="M360 160H870L850 325L764 406L716 453L680 510L668 560L655 645H360z" fill="url(#leftFace)"/>
            <path d="M820 310L745 395L690 450" fill="none" stroke="#abb8c9" stroke-width="18"/>
            <path d="M850 286C885 300 910 320 925 345L1042 533C1070 580 1068 640 1029 685L886 839" fill="none" stroke="#5e6570" stroke-width="34"/>
            <path d="M1059 600C1062 640 1048 665 1029 685L886 839C868 858 845 868 818 870" fill="none" stroke="#4f555f" stroke-width="40"/>
            <path d="M818 870L671 886C645 888 620 882 604 860" fill="none" stroke="url(#bottomEdge)" stroke-width="40"/>
          </g>
          <path d="M640 280h230v40H640z" fill="url(#topEdge)"/>
        </g>
        <ellipse cx="648" cy="536" rx="15" ry="28" fill="url(#shine)" transform="rotate(10 648 536)"/>
        <g fill="none" stroke="#90959e" stroke-width="1.300">
          <path d="M689 570L819 427L1021 423L731 740L529 743z"/>
        </g>
        <g fill="none" stroke="#21c3ee" stroke-width="1.500">
          <path d="M733 288L701 239L416 550L653 933L701 882"/>
        </g>
        <g fill="none" stroke="#7a4f58" stroke-width="1.300">
          <path d="M702 233L412 549L653 938L943 622z"/>
          <path d="M554 390L756 387L996 776L795 781z"/>
          <path d="M677 585h20M677 585l-18 20M677 585l14 24"/>
        </g>
        <path d="M701 585l-14-3v5zM657 607l6-10 4 4zM694 613l-9-10 4-3z" fill="#7a4f58"/>
        <g class="datum">
          <text x="755" y="386">FRONT</text>
          <text x="944" y="622">TOP</text>
          <text x="528" y="743">RIGHT</text>
          <text x="570" y="582">DEFAULT_CSYS</text>
        </g>
        <g class="axisname">
          <text x="703" y="582">Y</text>
          <text x="697" y="625">X</text>
          <text x="646" y="620">Z</text>
        </g>
        <g fill="none" stroke-width="1.300">
          <path d="M775 583h14" stroke="#3ef03e"/><path d="M775 583l-14 16" stroke="#39f4ff"/><path d="M775 583l12 19" stroke="#f33"/>
        </g>
        <circle cx="791" cy="583" r="3" fill="#3ef03e"/><circle cx="760" cy="599" r="2.500" fill="#39f4ff"/><circle cx="787" cy="603" r="2" fill="#f33"/>
      </svg>
      <div class="viewbar">
        <button aria-label="重新调整"><svg><use href="#zoomfit"/></svg></button>
        <button aria-label="放大"><svg><use href="#zoomin"/></svg></button>
        <button aria-label="缩小"><svg><use href="#zoomout"/></svg></button>
        <button aria-label="重画"><svg><use href="#repaint"/></svg></button>
        <button class="menu" aria-label="渲染选项"><svg><use href="#shade"/></svg></button>
        <button class="menu" aria-label="显示样式"><svg><use href="#view"/></svg></button>
        <button class="menu" aria-label="已保存方向"><svg><use href="#viewlist"/></svg></button>
        <button aria-label="视图管理器"><svg><use href="#viewmgr"/></svg></button>
        <button aria-label="透视图"><svg><use href="#perspective"/></svg></button>
        <button class="menu" aria-label="基准显示"><svg><use href="#datumdisp"/></svg></button>
        <button class="on" aria-label="注释显示"><svg><use href="#annot"/></svg></button>
        <button class="on" aria-label="旋转中心"><svg><use href="#spin"/></svg></button>
        <button aria-label="警告"><svg><use href="#warn"/></svg></button>
        <button aria-label="条纹"><svg><use href="#fringe"/></svg></button>
      </div>
    </div>
  </main>

  <!-- Status bar -->
  <footer class="status">
    <button class="on" aria-label="模型树"><svg class="ic18"><use href="#tree"/></svg></button>
    <button aria-label="浏览器"><svg class="ic18"><use href="#globe"/></svg></button>
    <button aria-label="全屏"><svg class="ic18"><use href="#page"/></svg></button>
    <span class="vline"></span>
    <p class="msg">将显示着色模型</p>
    <div class="find">
      <button aria-label="查找"><svg class="ic16"><use href="#binoc"/></svg></button>
      <button aria-label="查找选项"><i class="arrow"></i></button>
    </div>
    <div class="pick">
      <select aria-label="选择过滤器"><option>几何</option></select>
      <span class="drop"><i class="arrow"></i></span>
      <div class="watermark">
        <div class="cn"><span>野火</span>论坛</div>
        <div class="url">www.proewildfire.cn</div>
        <svg class="flame" width="18" height="42" viewBox="0 0 18 42"><path d="M5 0C15 9 18 17 17 26C16 34 11 38 7 42L1 37C6 31 5 20 0 9C6 13 8 17 9 21C11 15 9 6 5 0z" fill="#ff6a36"/></svg>
      </div>
    </div>
  </footer>
  <div class="taskbar">
    <div class="task"><svg width="50" height="7"><path d="M0 5h4v2H0z" fill="#3d7a32"/><path d="M10 5h18v2H10z" fill="#d9935f"/><path d="M34 5l4-3 2 5h-5z" fill="#ee82ee"/><path d="M47 3h3v4h-3z" fill="#246b62"/></svg></div>
    <div class="task2"></div>
    <time>21:30</time>
  </div>
</body>
</html>
```
FILE: styles.css
```css
* {
  box-sizing: border-box;
}

body {
  margin: 0;
  height: 100vh;
  display: flex;
  flex-direction: column;
  overflow: hidden;
  font-family: "Noto Sans", "Noto Sans CJK SC", sans-serif;
  font-size: 12px;
  line-height: 16px;
  color: #3c4446;
  background: #edf1f2;
}

button {
  padding: 0;
  border: none;
  background: none;
  font: inherit;
  color: inherit;
  display: flex;
  align-items: center;
  white-space: nowrap;
}

svg {
  display: block;
  flex: none;
}

.defs {
  position: absolute;
}

.ic16 { width: 16px; height: 16px; }
.ic18 { width: 18px; height: 18px; }
.ic20 { width: 20px; height: 20px; }

.arrow {
  flex: none;
  width: 0;
  height: 0;
  border: 4px solid transparent;
  border-top-color: #555b5d;
  border-bottom: none;
}

.arrow.faint { border-top-color: #5b5f60; }
.arrow.pale { border-top-color: #c0c5c6; }
.arrow.white { border-top-color: #fff; }

.vline {
  width: 1px;
  height: 24px;
  background: #8f9799;
}

/* title bar */
.titlebar {
  flex: none;
  height: 28px;
  display: grid;
  grid-template-columns: 1fr auto 1fr;
  align-items: center;
  background: #686f70;
}

.quick {
  display: flex;
  align-items: center;
  gap: 6px;
  padding-left: 11px;
}

.brand {
  width: 46px;
  color: #fff;
  font: 500 17px/24px Inter, sans-serif;
}

.brand sup {
  font-size: 8px;
  line-height: 1;
}

.closeicon {
  width: 13px;
  height: 12px;
  margin: 0 0 0 3px;
}

.title {
  font-size: 13px;
  color: #d3d6d7;
}

.winctl {
  display: flex;
  gap: 15px;
  justify-content: flex-end;
  padding-right: 10px;
}

/* ribbon tabs */
.tabs {
  flex: none;
  height: 30px;
  display: flex;
  gap: 1px;
  background: #3e4648;
  color: #fff;
  font-size: 13px;
}

.tabs > button {
  padding: 0 23px;
}

.tabs .file {
  width: 66px;
  padding: 0 20px;
  margin-right: -1px;
  background: linear-gradient(#62cb42, #55b038);
}

.tabs .active {
  background: #edf1f2;
  color: #4d8a2e;
}

.tabtools {
  margin-left: auto;
  display: flex;
  align-items: center;
  gap: 10px;
  padding: 0 8px 2px 0;
}

.tabtools .help {
  font-weight: bold;
}

/* ribbon */
.ribbon {
  flex: none;
  height: 114px;
  display: flex;
  padding: 1px 0 3px;
  border-bottom: 1px solid #7c8a8e;
}

.group {
  display: flex;
  flex-direction: column;
  border-right: 1px solid #a3aaad;
}

.g1 { width: 129px; }
.g2 { width: 107px; padding-left: 7px; }
.g3 { width: 151px; }
.g4 { width: 123px; }
.g5 { width: 151px; padding-left: 7px; }
.g6 { width: 215px; }
.g7 { width: 127px; }
.g8 { width: 70px; }

.cmds {
  display: flex;
  height: 84px;
}

.big {
  flex-direction: column;
  height: 84px;
  width: 46px;
  padding-top: 5px;
}

.big svg {
  width: 32px;
  height: 32px;
  margin-bottom: 11px;
}

.big .arrow {
  margin-top: 6px;
}

.g1 .big, .g7 .big { width: 62px; }
.g8 .big { width: 69px; }

.g5 .col:first-child { width: 78px; }
.g6 .col { width: 52px; }
.g3 .col { width: 58px; }

.cmd {
  height: 28px;
  gap: 4px;
}

.cmd svg {
  width: 16px;
  height: 16px;
}

.cmd .arrow {
  margin-left: 3px;
}

.cmd:disabled {
  color: #a9aeb0;
}

.cmd:disabled .arrow {
  border-top-color: #9da2a4;
}

.caption {
  align-self: center;
  height: 28px;
  gap: 3px;
}

.g2 .caption, .g5 .caption {
  margin-left: -7px;
}

/* main area */
main {
  flex: 1;
  min-height: 0;
  display: flex;
}

.side {
  flex: none;
  width: 194px;
  border-right: 3px solid #97a1a4;
}

.sidetabs {
  height: 29px;
  display: flex;
  background: #97a1a4;
  color: #fff;
}

.sidetabs button {
  width: 57px;
  padding-left: 8px;
  gap: 5px;
}

.sidetabs .active {
  width: 76px;
  padding-left: 8px;
  background: #edf1f2;
  color: #3c4446;
}

.sidetabs svg {
  width: 18px;
  height: 20px;
}

.cut {
  width: 20px;
  overflow: hidden;
  -webkit-mask-image: linear-gradient(to right, #000 50%, transparent);
  mask-image: linear-gradient(to right, #000 50%, transparent);
}

.treebar {
  height: 28px;
  display: flex;
  align-items: center;
  gap: 8px;
  padding-left: 28px;
}

.treebar b {
  font-weight: 500;
}

.filter {
  display: flex;
  align-items: center;
  padding-left: 12px;
  gap: 4px;
}

.search {
  position: relative;
  width: 111px;
}

.search input {
  display: block;
  width: 100%;
  height: 29px;
  padding: 0 24px 0 4px;
  border: 1px solid #7c8a8e;
  background: #fff;
  font: inherit;
}

.clear {
  position: absolute;
  top: 10px;
  right: 5px;
}

.filter > .arrow {
  margin: 0 7px 0 1px;
}

.tree {
  list-style: none;
  margin: 5px 5px 0 8px;
  padding: 0 0 6px;
  border-bottom: 2px solid #62c63f;
}

.tree li {
  display: flex;
  align-items: center;
  gap: 5px;
  height: 24px;
  padding-left: 23px;
}

.tree .root {
  padding-left: 3px;
}

.tree svg {
  width: 16px;
  height: 16px;
}

.tree .fold {
  padding-left: 9px;
}

.fold::before {
  content: "";
  border: 4px solid transparent;
  border-left: 7px solid #8b8f91;
  border-right: none;
  margin-right: 2px;
}

.canvas {
  flex: 1;
  position: relative;
  overflow: hidden;
  background: #e8e9ed;
}

.datum text, .axisname text {
  font: 15px "Liberation Mono", monospace;
  fill: #7a4f58;
}

.axisname text {
  font-size: 14px;
  fill: #111;
}

.viewbar {
  position: absolute;
  top: 6px;
  left: 50%;
  width: 374px;
  transform: translateX(-50%);
  display: flex;
  justify-content: space-between;
  padding: 4px;
  border: 1px solid #7c8a8e;
  background: #edf1f2;
}

.viewbar button {
  position: relative;
  width: 23px;
  height: 23px;
  justify-content: center;
  border: 1px solid transparent;
}

.viewbar svg {
  width: 16px;
  height: 16px;
}

.viewbar .on, .status .on {
  border: 1px solid #808385;
  background: #cdced0;
}

.viewbar .menu::after {
  content: "";
  position: absolute;
  right: -1px;
  bottom: 1px;
  border: 2px solid #444;
  border-top-color: transparent;
  border-left-color: transparent;
}

/* status bar */
.status {
  flex: none;
  height: 35px;
  display: flex;
  align-items: center;
  gap: 7px;
  padding: 0 18px 0 6px;
  border-top: 1px solid #7c8a8e;
}

.status .on {
  width: 22px;
  height: 24px;
  justify-content: center;
}

.msg {
  margin: 0 0 2px 1px;
  font-size: 11px;
}

.msg::before {
  content: "";
  display: inline-block;
  width: 5px;
  height: 5px;
  margin-right: 9px;
  border-radius: 50%;
  background: #1b5f80;
  vertical-align: 3px;
}

.find {
  margin-left: auto;
  display: flex;
  padding: 1px 2px;
  border: solid #8f9799;
  border-width: 0 1px;
}

.find::before {
  content: "";
  width: 1px;
  margin: 0 43px 0 -44px;
  background: #8f9799;
}

.find button {
  height: 24px;
  padding: 0 5px;
  border: 1px solid #bcc3c9;
  background: #f8f9fa;
}

.find button + button {
  padding: 0 2px;
  border-left: none;
}

.pick {
  position: relative;
  width: 177px;
  margin-left: 90px;
}

.pick select {
  appearance: none;
  display: block;
  width: 100%;
  height: 25px;
  padding: 0 8px;
  border: 1px solid #a9aeb0;
  border-radius: 0;
  background: #f8f8f8;
  font: inherit;
  color: inherit;
}

.drop {
  position: absolute;
  top: 1px;
  right: 1px;
  width: 15px;
  height: 23px;
  display: flex;
  align-items: center;
  justify-content: center;
  border-left: 1px solid #a9aeb0;
}

.watermark {
  position: absolute;
  right: -2px;
  bottom: -5px;
  width: 172px;
  pointer-events: none;
}

.cn {
  font: italic 300 40px/42px "Noto Sans CJK SC", sans-serif;
  color: #000;
  white-space: nowrap;
}

.cn span {
  color: #ff6a36;
  margin-right: 6px;
}

.url {
  font: italic 18px/18px "Liberation Sans", sans-serif;
  color: #9a9c9e;
  padding-left: 4px;
}

.flame {
  position: absolute;
  left: 64px;
  top: -16px;
}

/* taskbar */
.taskbar {
  flex: none;
  height: 8px;
  display: flex;
  overflow: hidden;
  padding-left: 48px;
  background: #1c1c1c;
}

.task {
  width: 344px;
  padding-left: 282px;
  border-top: 1px solid #bbb;
  background: #f2f2f2;
}

.task2 {
  width: 48px;
  margin-left: 198px;
  background: #484848;
}

.taskbar time {
  margin-left: auto;
  margin-right: 79px;
  color: #fff;
  line-height: 20px;
}
```
